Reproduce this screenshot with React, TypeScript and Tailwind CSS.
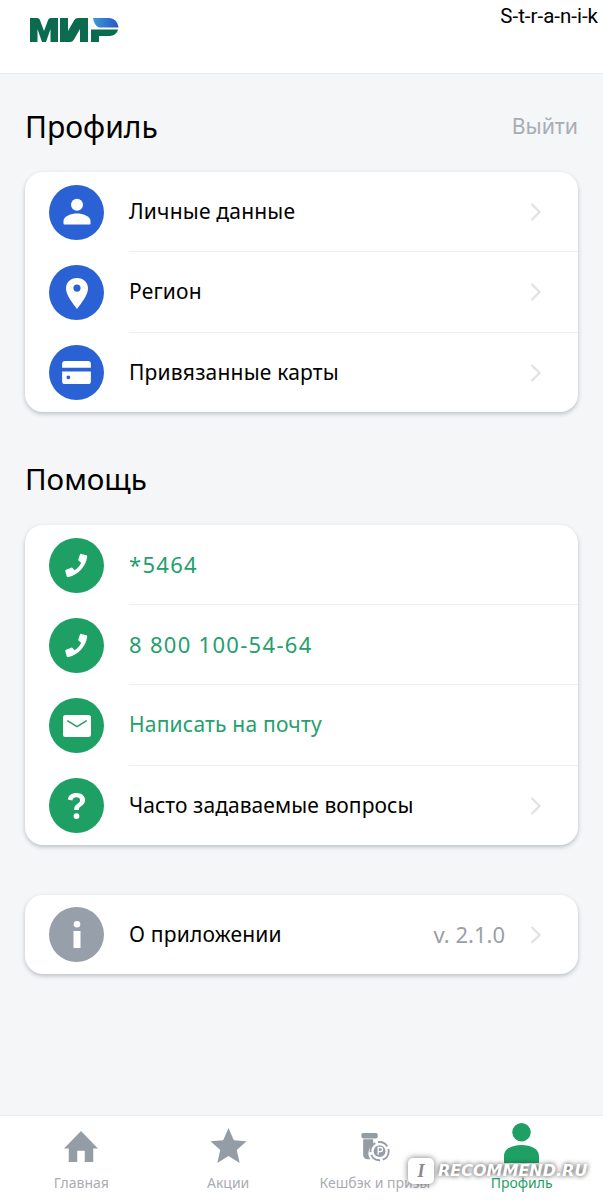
import React from "react";

const font = { fontFamily: '"Noto Sans", sans-serif' };

function Chevron() {
  return (
    <svg width="14" height="22" viewBox="0 0 14 22" fill="none" className="shrink-0">
      <path d="M2.500 3l8 8-8 8" stroke="#e0e3e6" strokeWidth="2.400" />
    </svg>
  );
}

function Circle({ color, children }: { color: string; children: React.ReactNode }) {
  return (
    <div className={`w-[55px] h-[55px] rounded-full flex items-center justify-center shrink-0 ${color}`}>
      {children}
    </div>
  );
}

const Person = () => (
  <svg width="30" height="30" viewBox="0 0 30 30" fill="#fff">
    <circle cx="15" cy="7.700" r="6" />
    <path d="M1.500 26.500V24c0-5 8-7.500 13.500-7.500S28.500 19 28.500 24v2.500c0 .6-.4 1-1 1h-25c-.6 0-1-.4-1-1z" />
  </svg>
);
const Pin = () => (
  <svg width="30" height="32" viewBox="0 0 30 32" fill="#fff">
    <path
      fillRule="evenodd"
      d="M15 1C8.500 1 4 5.500 4 11.500 4 18 11 26.500 15 32c4-5.500 11-14 11-20.500C26 5.500 21.500 1 15 1zm0 6.500a3.600 3.600 0 110 7.200 3.600 3.600 0 010-7.200z"
    />
  </svg>
);
const CardIcon = () => (
  <svg width="29" height="23" viewBox="0 0 30 24" fill="#fff">
    <path d="M0 3a3 3 0 013-3h24a3 3 0 013 3v4H0z" />
    <path fillRule="evenodd" d="M0 11h30v10a3 3 0 01-3 3H3a3 3 0 01-3-3zM6.500 15a2 2 0 100 4 2 2 0 000-4z" />
  </svg>
);
const Phone = () => (
  <svg width="25" height="25" viewBox="0 0 28 28" fill="#fff">
    <path d="M19.500 1l5.500 1.500c.8.300 1.100.9 1 1.700C24.500 15 16 24.500 5 27c-1 .2-1.700-.2-2-1l-1.500-5.500c-.2-.8.100-1.400.8-1.700l5.700-2.300c.6-.3 1.300-.1 1.700.4l2 2.500c3.500-1.900 6-4.800 7.500-8.400l-2.700-2.200c-.5-.4-.7-1.100-.4-1.700l1.700-5.200c.3-.7 1-1.100 1.700-.9z" />
  </svg>
);
const Mail = () => (
  <svg width="28" height="22" viewBox="0 0 28 22" fill="#fff">
    <path
      fillRule="evenodd"
      d="M2.500 0h23A2.500 2.500 0 0128 2.500v17a2.500 2.500 0 01-2.500 2.500h-23A2.500 2.500 0 010 19.500v-17A2.500 2.500 0 012.500 0zM4.700 5l-.8 1.300L14 12.500l10.100-6.200-.8-1.300L14 10.700z"
    />
  </svg>
);
const Question = () => (
  <svg width="21" height="30" viewBox="0 0 24 34" fill="#fff">
    <path d="M2 9.500C2.800 4.500 6.500 2 12 2c5.800 0 9.800 3.200 9.800 8 0 3.400-1.800 5.300-4.200 6.900-2.300 1.500-3 2.400-3 4.600H9.300c0-3.600 1.200-5.300 3.800-7 1.800-1.200 3-2.200 3-4.100 0-2-1.600-3.300-4.100-3.300-2.600 0-4.200 1.300-4.700 3.500z" />
    <circle cx="12" cy="28.500" r="3.300" />
  </svg>
);
const Info = () => (
  <svg width="8" height="27" viewBox="0 0 8 27" fill="#fff">
    <circle cx="4" cy="3.300" r="3.300" />
    <rect x="0.500" y="10" width="7" height="17" />
  </svg>
);

function Row({
  icon,
  color,
  label,
  textClass = "text-black tracking-[0.2px] text-[21px]",
  chevron,
  value,
  last,
  heightClass = "h-[80px]",
}: {
  icon: React.ReactNode;
  color: string;
  label: string;
  textClass?: string;
  chevron?: boolean;
  value?: string;
  last?: boolean;
  heightClass?: string;
}) {
  return (
    <div className={`flex items-center pl-[24px] ${heightClass}`}>
      <Circle color={color}>{icon}</Circle>
      <div
        className={`ml-[25px] flex-1 h-full flex items-center pr-[35px] ${last ? "" : "border-b border-[#eceef0]"}`}
      >
        <span className={`flex-1 ${textClass}`}>{label}</span>
        {value && <span className="text-[22px] text-[#9aa0a8] mr-[24px]">{value}</span>}
        {chevron && <Chevron />}
      </div>
    </div>
  );
}

function Card({ children, className = "" }: { children: React.ReactNode; className?: string }) {
  return (
    <div className={`bg-white rounded-[18px] shadow-[0_2px_4px_rgba(60,70,85,0.3)] ${className}`}>{children}</div>
  );
}

function Tab({ icon, label, active }: { icon: React.ReactNode; label: string; active?: boolean }) {
  return (
    <div className="flex-1 flex flex-col items-center">
      <div className="h-[47px] flex items-end justify-center">{icon}</div>
      <span className={`text-[14px] mt-[9px] ${active ? "text-[#1fa065]" : "text-[#a9adb3]"}`}>{label}</span>
    </div>
  );
}

export default function App() {
  const blue = "bg-[#2a62d6]";
  const green = "bg-[#1ea064]";
  const greenText = "text-[#23a06c] text-[21px] tracking-[0.2px]";
  const greenDigits = "text-[#23a06c] text-[22px] tracking-[1.300px]";
  return (
    <div className="relative w-[603px] h-[1200px] flex flex-col bg-[#f4f6f8] overflow-hidden" style={font}>
      <header className="relative h-[74px] bg-white border-b border-[#e8eaed] shrink-0">
        <svg width="90" height="24" viewBox="0 0 90 24" className="absolute left-[29px] top-[18px]">
          <defs>
            <linearGradient id="mir" x1="0" x2="1" y1="0" y2="0">
              <stop offset="0" stopColor="#3a9ad9" />
              <stop offset="1" stopColor="#2a55c8" />
            </linearGradient>
          </defs>
          <path
            fill="#0a6b4f"
            d="M1 0h7c1.500 0 2.500.8 3 2.300L15 13l4-10.700c.5-1.500 1.500-2.300 3-2.300h7v24h-7.500V11L17 24h-4L8.500 11v13H1z"
          />
          <path
            fill="#0a6b4f"
            d="M31 0h8v13l6-10.500C46 .8 47.500 0 49 0h10v24h-8V11l-6 10.500c-1 1.700-2.500 2.500-4 2.500H31z"
          />
          <path fill="url(#mir)" d="M64 0h16c5 0 8.500 3.500 9.500 9.500H71C67.500 9.500 64.800 5 64 0z" />
          <path fill="#0a6b4f" d="M62 11.500h27C88 16 84 18 80 18H70v6h-8z" />
        </svg>
        <span
          className="absolute right-[5px] top-[1px] text-[20.500px] text-black"
          style={{ fontFamily: "Roboto, sans-serif" }}
        >
          S-t-r-a-n-i-k
        </span>
      </header>

      <main className="flex-1 px-[25px]">
        <div className="flex items-center justify-between h-[40px] mt-[32px] mb-[26px]">
          <h1 className="text-[30px] text-black">Профиль</h1>
          <span className="text-[21.300px] text-[#a9adb3]">Выйти</span>
        </div>
        <Card>
          <Row icon={<Person />} color={blue} label="Личные данные" chevron />
          <Row icon={<Pin />} color={blue} label="Регион" chevron heightClass="h-[81px]" />
          <Row icon={<CardIcon />} color={blue} label="Привязанные карты" chevron last heightClass="h-[79px]" />
        </Card>

        <h2 className="flex items-center h-[40px] mt-[47px] mb-[26px] text-[29.500px] text-black">Помощь</h2>
        <Card>
          <Row icon={<Phone />} color={green} label="*5464" textClass={greenDigits} />
          <Row icon={<Phone />} color={green} label="8 800 100-54-64" textClass={greenDigits} />
          <Row icon={<Mail />} color={green} label="Написать на почту" textClass={greenText} heightClass="h-[81px]" />
          <Row
            icon={<Question />}
            color={green}
            label="Часто задаваемые вопросы"
            textClass="text-black text-[21px] tracking-[0.070px]"
            chevron
            last
            heightClass="h-[79px]"
          />
        </Card>

        <Card className="mt-[50px]">
          <Row
            icon={<Info />}
            color="bg-[#97a0aa]"
            label="О приложении"
            value="v. 2.1.0"
            chevron
            last
            heightClass="h-[79px]"
          />
        </Card>
      </main>

      <nav className="h-[85px] shrink-0 bg-white border-t border-[#e8eaed] flex px-[8px]">
        <Tab
          label="Главная"
          icon={
            <svg width="36" height="32" viewBox="0 0 38 34" fill="#949ca6">
              <path d="M19 0L37 18.500h-5V33H23V21h-8v12H6V18.500H1z" />
            </svg>
          }
        />
        <Tab
          label="Акции"
          icon={
            <svg width="37" height="35" viewBox="0 0 38 36" fill="#949ca6">
              <path d="M19 0l5.500 12.500L37.500 13.700l-10 8.800L30.500 36 19 28.700 7.500 36l3-13.500-10-8.800 13-1.200z" />
            </svg>
          }
        />
        <Tab
          label="Кешбэк и призы"
          icon={
            <svg width="30" height="31" viewBox="0 0 32 34" fill="none">
              <rect x="1" y="1" width="18" height="6" rx="2" fill="#949ca6" />
              <path d="M3 8h11v6a11 11 0 00-3 16H8c-3 0-5-2-5-5z" fill="#949ca6" />
              <circle cx="21" cy="21" r="10" stroke="#949ca6" strokeWidth="2" strokeDasharray="12 3" />
              <circle cx="21" cy="21" r="6.500" fill="#949ca6" />
              <path d="M19.500 25v-8h2.500a2 2 0 010 4.500h-2.500" stroke="#fff" strokeWidth="1.400" />
            </svg>
          }
        />
        <Tab
          active
          label="Профиль"
          icon={
            <svg width="35" height="40" viewBox="0 0 36 41" fill="#1ea064">
              <circle cx="18" cy="9.500" r="9.500" />
              <path d="M0 41v-7c0-8 9-11.500 18-11.500S36 26 36 34v7z" />
            </svg>
          }
        />
      </nav>

      <div className="absolute left-[408px] top-[1158px] flex items-center" style={{ fontFamily: '"DejaVu Sans", sans-serif' }}>
        <div
          className="w-[26px] h-[26px] rounded-[5px] bg-white shadow-[0_0_6px_rgba(0,0,0,0.55)] flex items-center justify-center text-[18px] font-bold italic text-[#8a8a8a]"
          style={{ fontFamily: '"Liberation Serif", serif' }}
        >
          I
        </div>
        <span className="ml-[4px] text-[16px] font-bold italic text-white [text-shadow:0_0_5px_rgba(0,0,0,0.8)]">
          RECOMMEND.RU
        </span>
      </div>
    </div>
  );
}
